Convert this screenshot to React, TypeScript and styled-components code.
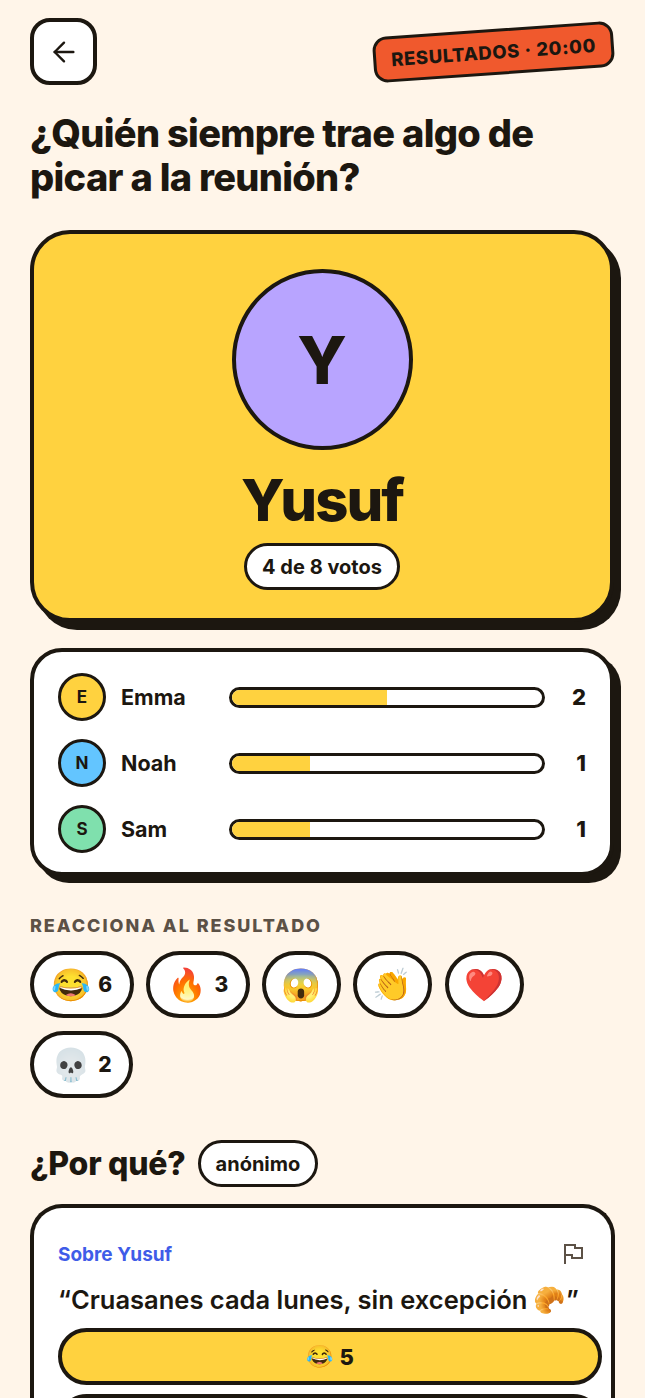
import { ReactElement } from 'react';
import styled, { createGlobalStyle } from 'styled-components';
import { ArrowLeft } from 'lucide-react';

const INK = '#1c1710';
const YELLOW = '#ffd23f';

const GlobalStyle = createGlobalStyle`
  html, body {
    margin: 0;
    height: 1398px;
    overflow: hidden;
    background: #fff5e9;
  }
  body {
    font-family: Inter, "Liberation Sans", "Noto Color Emoji", sans-serif;
    color: ${INK};
  }
`;

const Page = styled.div`
  padding: 18px 30px 0;
  box-sizing: border-box;
  width: 645px;
`;

const TopBar = styled.div`
  display: flex;
  justify-content: space-between;
  align-items: flex-start;
`;

const BackButton = styled.button`
  width: 67px;
  height: 67px;
  box-sizing: border-box;
  border: 4px solid ${INK};
  border-radius: 20px;
  background: #fff;
  color: ${INK};
  padding: 0;
  display: flex;
  align-items: center;
  justify-content: center;
`;

const Badge = styled.div`
  margin: 11px 1px 0 0;
  width: 241px;
  height: 46px;
  box-sizing: border-box;
  border: 3px solid ${INK};
  border-radius: 14px;
  background: #f0592d;
  transform: rotate(-4deg);
  display: flex;
  align-items: center;
  justify-content: center;
  font-size: 18.5px;
  font-weight: 800;
  letter-spacing: 0.6px;
  white-space: nowrap;
`;

const Title = styled.h1`
  margin: 26px 0 0;
  font-size: 38px;
  line-height: 44px;
  font-weight: 800;
  letter-spacing: -0.7px;
`;

const WinnerCard = styled.section`
  margin-top: 31px;
  width: 584px;
  height: 392px;
  box-sizing: border-box;
  border: 4px solid ${INK};
  border-radius: 40px;
  background: ${YELLOW};
  box-shadow: 7px 8px 0 ${INK};
  display: flex;
  flex-direction: column;
  align-items: center;
  padding-top: 35px;
`;

const WinnerAvatar = styled.div`
  width: 181px;
  height: 181px;
  flex: none;
  box-sizing: border-box;
  border: 4px solid ${INK};
  border-radius: 50%;
  background: #b8a4ff;
  display: flex;
  align-items: center;
  justify-content: center;
  font-size: 66px;
  font-weight: 800;
`;

const WinnerName = styled.div`
  margin-top: 15px;
  font-size: 58px;
  line-height: 70px;
  font-weight: 800;
  letter-spacing: -2px;
`;

const VotesPill = styled.div`
  margin-top: 8px;
  height: 47px;
  padding: 0 15px;
  box-sizing: border-box;
  border: 3px solid ${INK};
  border-radius: 24px;
  background: #fff;
  display: flex;
  align-items: center;
  font-size: 20px;
  font-weight: 700;
`;

const ResultsCard = styled.section`
  margin-top: 26px;
  width: 584px;
  height: 228px;
  box-sizing: border-box;
  border: 4px solid ${INK};
  border-radius: 32px;
  background: #fff;
  box-shadow: 7px 7px 0 ${INK};
  padding: 21px 24px;
  display: flex;
  flex-direction: column;
  gap: 18px;
`;

const Row = styled.div`
  display: flex;
  align-items: center;
  height: 48px;
`;

const RowAvatar = styled.div<{ $color: string }>`
  width: 48px;
  height: 48px;
  flex: none;
  box-sizing: border-box;
  border: 3px solid ${INK};
  border-radius: 50%;
  background: ${(p) => p.$color};
  display: flex;
  align-items: center;
  justify-content: center;
  font-size: 17px;
  font-weight: 700;
`;

const RowName = styled.div`
  margin-left: 15px;
  width: 108px;
  flex: none;
  font-size: 21.5px;
  font-weight: 700;
`;

const Bar = styled.div`
  width: 316px;
  height: 21px;
  flex: none;
  box-sizing: border-box;
  border: 3px solid ${INK};
  border-radius: 11px;
  background: #fff;
  overflow: hidden;
`;

const BarFill = styled.div`
  height: 100%;
  background: ${YELLOW};
`;

const RowValue = styled.div`
  flex: 1;
  text-align: right;
  font-size: 22px;
  font-weight: 800;
`;

const SectionLabel = styled.div`
  margin-top: 39px;
  font-size: 18px;
  line-height: 22px;
  font-weight: 800;
  letter-spacing: 1.95px;
  color: #5c5146;
`;

const Chips = styled.div`
  margin-top: 14px;
  display: flex;
  flex-wrap: wrap;
  gap: 13px 12.3px;
`;

const Chip = styled.button<{ $counted: boolean }>`
  height: 67px;
  min-width: 79px;
  padding: 0 ${(p) => (p.$counted ? 17.5 : 15.5)}px;
  box-sizing: border-box;
  border: 4px solid ${INK};
  border-radius: 34px;
  background: #fff;
  color: ${INK};
  display: flex;
  align-items: center;
  justify-content: center;
  gap: 7px;
  font-family: inherit;
  font-size: 21px;
  font-weight: 800;
`;

const Emoji = styled.span<{ $size?: number }>`
  font-family: "Noto Color Emoji", sans-serif;
  font-size: ${(p) => p.$size ?? 32}px;
  line-height: 1;
  font-weight: 400;
`;

const WhyHeader = styled.div`
  margin-top: 42px;
  display: flex;
  align-items: center;
  gap: 12px;
`;

const WhyTitle = styled.h2`
  margin: 0;
  font-size: 32px;
  font-weight: 800;
  letter-spacing: -0.25px;
`;

const AnonPill = styled.div`
  height: 47px;
  padding: 0 15px;
  box-sizing: border-box;
  border: 3px solid ${INK};
  border-radius: 24px;
  background: #fff;
  display: flex;
  align-items: center;
  font-size: 20px;
  font-weight: 700;
`;

const CommentCard = styled.section`
  margin-top: 17px;
  box-sizing: border-box;
  border: 4px solid ${INK};
  border-bottom: 0;
  border-radius: 32px 32px 0 0;
  background: #fff;
  padding: 34px 24px 40px;
  height: 260px;
`;

const CommentHead = styled.div`
  display: flex;
  align-items: center;
  justify-content: space-between;
  height: 24px;
`;

const About = styled.div`
  font-size: 19px;
  font-weight: 700;
  color: #3f5ce8;
`;

const FlagIcon = styled.svg`
  width: 24px;
  height: 24px;
  margin-right: 2px;
  fill: none;
  stroke: #5c5146;
  stroke-width: 2;
`;

const Quote = styled.div`
  margin: 17px 0 11px;
  font-size: 25.5px;
  line-height: 34px;
  font-weight: 600;
  white-space: nowrap;
`;

const VoteButton = styled.button<{ $active?: boolean }>`
  display: flex;
  width: 544px;
  height: 57px;
  margin-bottom: 9px;
  box-sizing: border-box;
  border: 4px solid ${INK};
  border-radius: 29px;
  background: ${(p) => (p.$active ? YELLOW : '#fff')};
  color: ${INK};
  align-items: center;
  justify-content: center;
  gap: 6px;
  font-family: inherit;
  font-size: 22px;
  font-weight: 800;
`;

const others = [
  { name: 'Emma', color: YELLOW, votes: 2 },
  { name: 'Noah', color: '#63c5ff', votes: 1 },
  { name: 'Sam', color: '#7fe0ad', votes: 1 }
];

const reactions = [
  { emoji: '😂', count: 6 },
  { emoji: '🔥', count: 3 },
  { emoji: '😱' },
  { emoji: '👏' },
  { emoji: '❤️' },
  { emoji: '💀', count: 2 }
];

const App = (): ReactElement => {
  return (
    <Page>
      <GlobalStyle />
      <TopBar>
        <BackButton aria-label="Volver">
          <ArrowLeft size={32} strokeWidth={1.8} />
        </BackButton>
        <Badge>RESULTADOS · 20:00</Badge>
      </TopBar>
      <Title>¿Quién siempre trae algo de picar a la reunión?</Title>
      <WinnerCard>
        <WinnerAvatar>Y</WinnerAvatar>
        <WinnerName>Yusuf</WinnerName>
        <VotesPill>4 de 8 votos</VotesPill>
      </WinnerCard>
      <ResultsCard>
        {others.map((o) => (
          <Row key={o.name}>
            <RowAvatar $color={o.color}>{o.name[0]}</RowAvatar>
            <RowName>{o.name}</RowName>
            <Bar>
              <BarFill style={{ width: `${(o.votes / 4) * 100}%` }} />
            </Bar>
            <RowValue>{o.votes}</RowValue>
          </Row>
        ))}
      </ResultsCard>
      <SectionLabel>REACCIONA AL RESULTADO</SectionLabel>
      <Chips>
        {reactions.map((r) => (
          <Chip key={r.emoji} $counted={r.count !== undefined}>
            <Emoji>{r.emoji}</Emoji>
            {r.count}
          </Chip>
        ))}
      </Chips>
      <WhyHeader>
        <WhyTitle>¿Por qué?</WhyTitle>
        <AnonPill>anónimo</AnonPill>
      </WhyHeader>
      <CommentCard>
        <CommentHead>
          <About>Sobre Yusuf</About>
          <FlagIcon viewBox="0 0 24 24">
            <path d="M4 22V3h10v3h7v10H11v-3H4" />
          </FlagIcon>
        </CommentHead>
        <Quote>
          “Cruasanes cada lunes, sin excepción <Emoji $size={26}>🥐</Emoji>”
        </Quote>
        <VoteButton $active>
          <Emoji $size={22}>😂</Emoji>5
        </VoteButton>
        <VoteButton />
      </CommentCard>
    </Page>
  );
};

export default App;
